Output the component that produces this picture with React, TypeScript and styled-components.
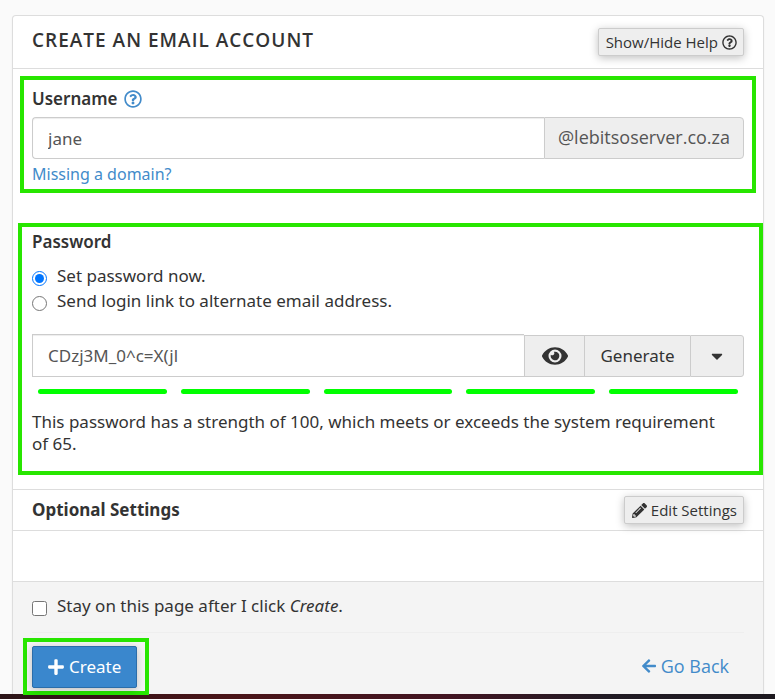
import React, { useState } from "react";
import styled, { createGlobalStyle, css } from "styled-components";
import {
  FaArrowLeft,
  FaCaretDown,
  FaEye,
  FaPencilAlt,
  FaPlus,
  FaRegQuestionCircle,
} from "react-icons/fa";

const color = {
  text: "#333333",
  muted: "#555555",
  link: "#428bca",
  line: "#dddddd",
  control: "#cccccc",
  button: "#eeeeee",
  highlight: "#28e600",
};

const font = {
  body: '"Noto Sans", "Open Sans", sans-serif',
  accent: '"Open Sans", "Noto Sans", sans-serif',
};

const GlobalStyle = createGlobalStyle`
  *, *::before, *::after { box-sizing: border-box; }
  body {
    margin: 0;
    background: #fafafa;
    color: ${color.text};
    font-family: ${font.body};
    font-size: 17px;
    line-height: 22px;
  }
  button, input { font: inherit; color: inherit; }
`;

const Page = styled.div`
  display: flex;
  flex-direction: column;
  min-height: 100vh;
  padding-top: 15px;
`;

const Card = styled.form`
  flex: 1;
  display: flex;
  flex-direction: column;
  margin: 0 11px 0 12px;
  background: #ffffff;
  border: 1px solid ${color.line};
  border-bottom: 0;
  border-radius: 4px 4px 0 0;
  box-shadow: 0 1px 2px rgba(0, 0, 0, 0.05);
`;

const SectionBar = styled.div<{ $size: "title" | "section" }>`
  display: flex;
  align-items: center;
  justify-content: space-between;
  padding: 0 19px;
  border-bottom: 1px solid ${color.line};
  ${(p) =>
    p.$size === "title"
      ? css`
          height: 53px;
        `
      : css`
          height: 42px;
          border-top: 1px solid ${color.line};
        `}
`;

const Title = styled.h1`
  margin: 0;
  padding-bottom: 4px;
  font-family: ${font.accent};
  font-size: 19px;
  font-weight: 600;
  letter-spacing: 1px;
  text-transform: uppercase;
`;

const SectionTitle = styled.h2`
  margin: 0;
  font-size: 17px;
  font-weight: 700;
`;

const SmallButton = styled.button`
  display: inline-flex;
  align-items: center;
  gap: 4px;
  height: 28px;
  padding: 0 6px 0 7px;
  background: ${color.button};
  border: 1px solid ${color.control};
  border-radius: 2px;
  box-shadow: 0 2px 8px rgba(0, 0, 0, 0.25);
  font-family: ${font.accent};
  font-size: 15px;
  line-height: 20px;
`;

const UsernameGroup = styled.section`
  margin: 7px 7px 30px;
  padding: 8px 8px 4px;
  border: 4px solid ${color.highlight};
`;

const PasswordGroup = styled.section`
  margin: 0 0 14px 5px;
  padding: 4px 15px 16px 10px;
  border: 4px solid ${color.highlight};
`;

const LabelRow = styled.div`
  display: flex;
  align-items: center;
  gap: 7px;
  margin-bottom: 7px;
`;

const FieldLabel = styled.label`
  font-weight: 600;
`;

const GroupLabel = styled.div`
  font-weight: 600;
`;

const HelpButton = styled.button`
  display: inline-flex;
  padding: 0;
  border: 0;
  background: none;
  color: ${color.link};
`;

const InputRow = styled.div`
  display: flex;
  align-items: flex-end;
`;

const TextInput = styled.input<{ $rounded?: boolean }>`
  flex: 1;
  min-width: 0;
  height: ${(p) => (p.$rounded ? "42px" : "43px")};
  padding: 0 15px;
  color: ${color.muted};
  background: #ffffff;
  border: 1px solid ${color.control};
  border-right: 0;
  border-radius: ${(p) => (p.$rounded ? "4px 0 0 4px" : "0")};
  box-shadow: inset 0 1px 1px rgba(0, 0, 0, 0.075);
  outline: none;
`;

const DomainAddon = styled.span`
  height: 42px;
  padding: 0 13px;
  font-family: ${font.accent};
  font-size: 18px;
  line-height: 38px;
  color: ${color.muted};
  background: ${color.button};
  border: 1px solid ${color.control};
  border-radius: 0 4px 4px 0;
`;

const AddonButton = styled.button<{ $width: number; $last?: boolean }>`
  display: inline-flex;
  align-items: center;
  justify-content: center;
  height: 42px;
  min-width: ${(p) => p.$width}px;
  padding: 0 10px;
  background: ${color.button};
  border: 1px solid ${color.control};
  border-right-width: ${(p) => (p.$last ? "1px" : "0")};
  border-radius: ${(p) => (p.$last ? "0 3px 3px 0" : "0")};
`;

const TextLink = styled.a<{ $small?: boolean }>`
  display: inline-flex;
  align-items: center;
  gap: 4px;
  font-family: ${(p) => (p.$small ? font.body : font.accent)};
  font-size: ${(p) => (p.$small ? "16px" : "18px")};
  color: ${color.link};
  text-decoration: none;
`;

const DomainHelp = styled.div`
  margin-top: 4px;
`;

const Options = styled.div`
  margin: 10px 0 21px;
`;

const Choice = styled.label`
  display: flex;
  align-items: center;
  gap: 10px;
  height: 25px;

  input {
    width: 15px;
    height: 15px;
    margin: 6px 0 0;
    accent-color: #0075ff;
  }
`;

const StrengthMeter = styled.div`
  display: grid;
  grid-template-columns: repeat(5, 1fr);
  gap: 14px;
  padding: 0 6px;
  margin: 12px 0 17px;
`;

const StrengthBar = styled.span`
  height: 5px;
  border-radius: 3px;
  background: #00ff00;
`;

const StrengthText = styled.p`
  margin: 0;
  padding-right: 15px;
`;

const SettingsBody = styled.div`
  height: 50px;
`;

const Footer = styled.footer`
  flex: 1;
  padding: 11px 19px 0;
  background: #f4f4f4;
  border-top: 1px solid ${color.line};
`;

const Actions = styled.div`
  display: flex;
  align-items: center;
  justify-content: space-between;
  margin-top: 14px;
  border-top: 1px solid #eeeeee;
  padding: 5px 15px 0 0;
`;

const CreateFrame = styled.div`
  position: relative;
  z-index: 1;
  margin: 0 0 -1px -9px;
  padding: 4px 8px 3px 5px;
  border: 4px solid ${color.highlight};
`;

const CreateButton = styled.button`
  display: inline-flex;
  align-items: center;
  gap: 4px;
  height: 42px;
  padding: 0 15px 0 14px;
  color: #ffffff;
  background: #3a87cd;
  border: 1px solid #2b6daa;
  border-radius: 2px;
  box-shadow: 0 2px 8px rgba(0, 0, 0, 0.22);
  vertical-align: top;
`;

const BottomStrip = styled.div`
  height: 5px;
  background: linear-gradient(90deg, #2c1518, #4a1418 30%, #421421 58%, #211b24 78%, #1d191f);
`;

export default function App() {
  const [username, setUsername] = useState("jane");
  const [password, setPassword] = useState("CDzj3M_0^c=X(jl");

  return (
    <>
      <GlobalStyle />
      <Page>
        <Card onSubmit={(e) => e.preventDefault()}>
          <SectionBar $size="title">
            <Title>Create an Email Account</Title>
            <SmallButton type="button">
              Show/Hide Help <FaRegQuestionCircle size={15} />
            </SmallButton>
          </SectionBar>

          <UsernameGroup>
            <LabelRow>
              <FieldLabel htmlFor="username">Username</FieldLabel>
              <HelpButton type="button" aria-label="Username help">
                <FaRegQuestionCircle size={18} />
              </HelpButton>
            </LabelRow>
            <InputRow>
              <TextInput
                id="username"
                $rounded
                value={username}
                onChange={(e) => setUsername(e.target.value)}
              />
              <DomainAddon>@lebitsoserver.co.za</DomainAddon>
            </InputRow>
            <DomainHelp>
              <TextLink $small href="#domains">
                Missing a domain?
              </TextLink>
            </DomainHelp>
          </UsernameGroup>

          <PasswordGroup>
            <GroupLabel id="password-label">Password</GroupLabel>
            <Options role="radiogroup" aria-labelledby="password-label">
              <Choice>
                <input type="radio" name="password-mode" defaultChecked />
                Set password now.
              </Choice>
              <Choice>
                <input type="radio" name="password-mode" />
                Send login link to alternate email address.
              </Choice>
            </Options>
            <InputRow>
              <TextInput
                aria-labelledby="password-label"
                value={password}
                onChange={(e) => setPassword(e.target.value)}
              />
              <AddonButton type="button" $width={60} aria-label="Hide password">
                <FaEye size={26} />
              </AddonButton>
              <AddonButton type="button" $width={106}>
                Generate
              </AddonButton>
              <AddonButton type="button" $width={54} $last aria-label="Generator options">
                <FaCaretDown size={18} />
              </AddonButton>
            </InputRow>
            <StrengthMeter aria-hidden="true">
              {[20, 40, 60, 80, 100].map((level) => (
                <StrengthBar key={level} />
              ))}
            </StrengthMeter>
            <StrengthText>
              This password has a strength of 100, which meets or exceeds the system requirement of
              65.
            </StrengthText>
          </PasswordGroup>

          <SectionBar $size="section">
            <SectionTitle>Optional Settings</SectionTitle>
            <SmallButton type="button">
              <FaPencilAlt size={15} /> Edit Settings
            </SmallButton>
          </SectionBar>
          <SettingsBody />

          <Footer>
            <Choice>
              <input type="checkbox" />
              <span>
                Stay on this page after I click <em>Create</em>.
              </span>
            </Choice>
            <Actions>
              <CreateFrame>
                <CreateButton type="submit">
                  <FaPlus size={18} /> Create
                </CreateButton>
              </CreateFrame>
              <TextLink href="#back">
                <FaArrowLeft size={16} /> Go Back
              </TextLink>
            </Actions>
          </Footer>
        </Card>
        <BottomStrip />
      </Page>
    </>
  );
}
